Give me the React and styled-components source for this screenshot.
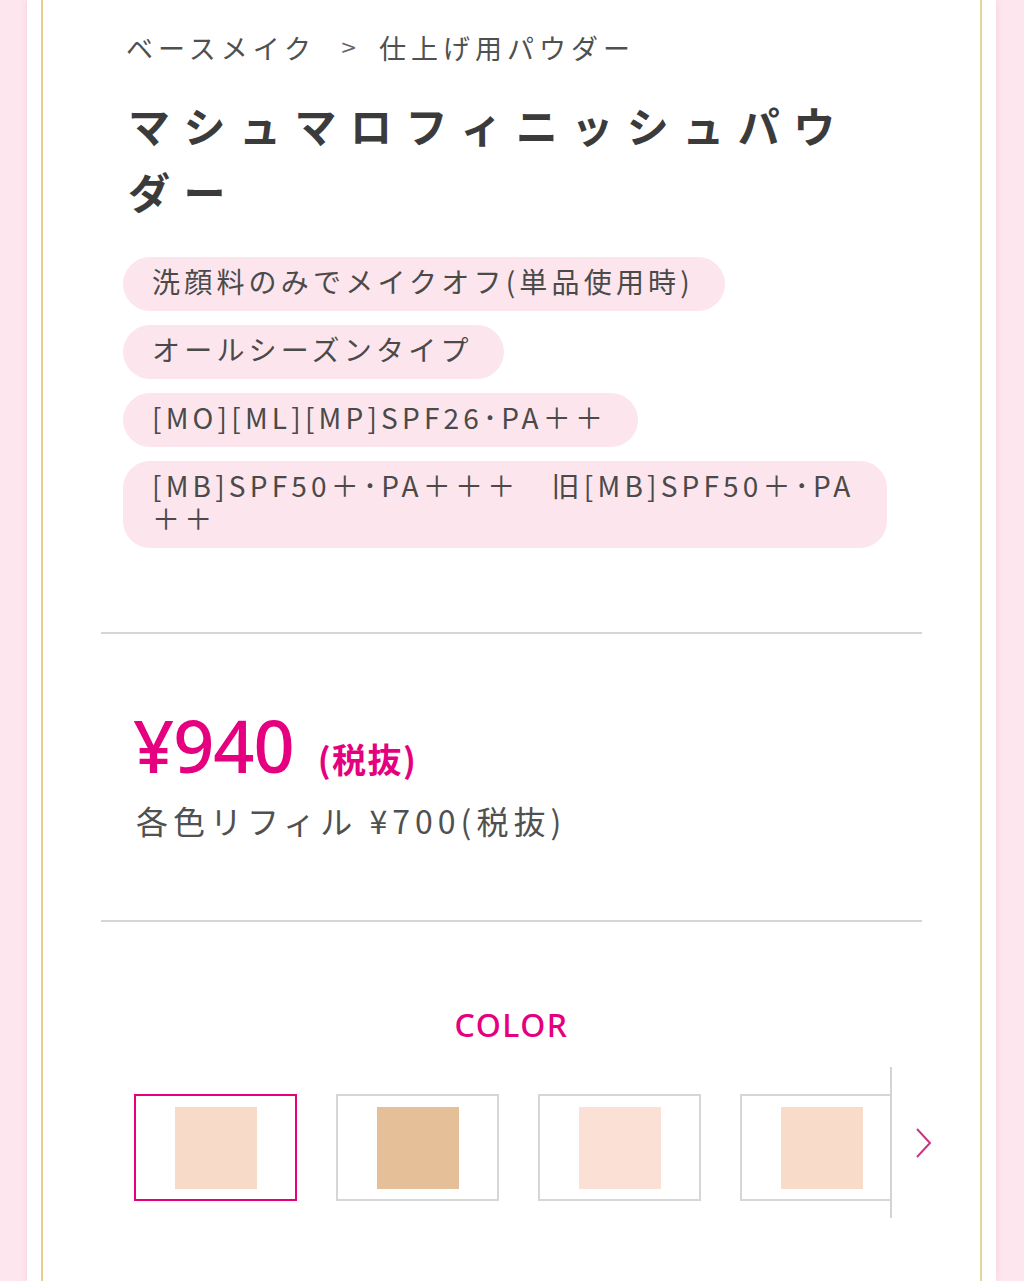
import React from "react";
import styled, { createGlobalStyle } from "styled-components";

const Global = createGlobalStyle`
  html, body { margin: 0; padding: 0; }
  body {
    background: #fde6ed;
    font-family: "Noto Sans CJK JP", "Noto Sans", sans-serif;
    color: #4a4a4a;
    overflow-x: hidden;
  }
  * { box-sizing: border-box; }
`;

const Page = styled.div`
  min-height: 1281px;
  display: flex;
  padding: 0 28px 0 27px;
`;

const Card = styled.div`
  flex: 1;
  min-width: 0;
  background: #ffffff;
  padding: 0 14px;
  display: flex;
  box-shadow: 0 0 6px rgba(236, 170, 190, 0.35);
`;

const Frame = styled.div`
  flex: 1;
  min-width: 0;
  border-left: 2px solid #e8cd8c;
  border-right: 2px solid #e2d699;
  padding: 28px 58px 60px;
`;

const Inner = styled.div`
  padding: 0 22px;
`;

const Breadcrumb = styled.nav`
  display: flex;
  align-items: center;
  font-size: 27px;
  line-height: 39px;
  letter-spacing: 5px;
  color: #505050;
  padding-left: 3px;
`;

const Crumb = styled.span``;

const Sep = styled.span`
  font-family: "DejaVu Sans", sans-serif;
  font-size: 20px;
  color: #666;
  margin: 0 22px 0 24px;
  letter-spacing: 0;
`;

const Title = styled.h1`
  margin: 25px 0 0;
  padding-left: 5px;
  max-width: 760px;
  font-size: 42px;
  font-weight: 700;
  line-height: 66px;
  letter-spacing: 13.5px;
  color: #3b3b3b;
`;

const Tags = styled.div`
  margin-top: 33px;
  display: flex;
  flex-direction: column;
  align-items: flex-start;
  gap: 14px;
`;

const Tag = styled.div`
  background: #fce5ec;
  border-radius: 27px;
  padding: 8px 31px 13px 29px;
  font-size: 28px;
  line-height: 33px;
  letter-spacing: 4.2px;
  color: #4a4a4a;
  max-width: 764px;
`;

const Divider = styled.hr`
  margin: ${(p) => p.$top}px 0 0;
  border: none;
  height: 2px;
  background: #d6d6d6;
`;

const PriceRow = styled.div`
  margin-top: 69px;
  padding-left: 32px;
  display: flex;
  align-items: baseline;
  color: #e4007f;
  line-height: 84px;
`;

const Price = styled.span`
  font-family: "Noto Sans", sans-serif;
  font-size: 72px;
  font-weight: 500;
  letter-spacing: -1px;
`;

const Tax = styled.span`
  font-size: 34px;
  font-weight: 700;
  margin-left: 24px;
  letter-spacing: 1.5px;
`;

const Refill = styled.div`
  margin-top: -5px;
  padding-left: 35px;
  font-size: 32px;
  line-height: 48px;
  letter-spacing: 5px;
  color: #505050;
`;

const ColorHead = styled.h2`
  margin: 84px 0 0;
  text-align: center;
  font-family: "Noto Sans", sans-serif;
  font-size: 32px;
  font-weight: 500;
  line-height: 38px;
  letter-spacing: 1.5px;
  color: #e4007f;
`;

const Slider = styled.div`
  margin-top: 23px;
  display: flex;
  align-items: center;
  padding-left: 33px;
`;

const Viewport = styled.div`
  flex: 0 0 758px;
  height: 151px;
  overflow: hidden;
  border-right: 2px solid #d4d4d4;
  padding-top: 27px;
`;

const Track = styled.div`
  display: flex;
  gap: 39px;
`;

const SwatchBox = styled.button`
  flex: 0 0 163px;
  height: 107px;
  border: 2px solid ${(p) => (p.$active ? "#e4007f" : "#d6d6d6")};
  background: #fff;
  padding: 0;
  display: flex;
  align-items: center;
  justify-content: center;
  cursor: pointer;
`;

const Chip = styled.span`
  width: 82px;
  height: 82px;
  background: ${(p) => p.$c};
`;

const NextBtn = styled.button`
  flex: 0 0 auto;
  margin-left: 23px;
  border: none;
  background: none;
  padding: 0;
  display: flex;
  cursor: pointer;
`;

const swatches = ["#f8dac8", "#e4bf98", "#fbe1d5", "#f9dbc9", "#f3cfb6"];

export default function App() {
  return (
    <>
      <Global />
      <Page>
        <Card>
          <Frame>
            <Inner>
              <Breadcrumb>
                <Crumb>ベースメイク</Crumb>
                <Sep>&gt;</Sep>
                <Crumb>仕上げ用パウダー</Crumb>
              </Breadcrumb>
              <Title>マシュマロフィニッシュパウダー</Title>
              <Tags>
                <Tag>洗顔料のみでメイクオフ(単品使用時)</Tag>
                <Tag>オールシーズンタイプ</Tag>
                <Tag>[MO][ML][MP]SPF26･PA＋＋</Tag>
                <Tag>[MB]SPF50＋･PA＋＋＋　旧[MB]SPF50＋･PA＋＋</Tag>
              </Tags>
            </Inner>
            <Divider $top={84} />
            <PriceRow>
              <Price>¥940</Price>
              <Tax>(税抜)</Tax>
            </PriceRow>
            <Refill>各色リフィル ¥700(税抜)</Refill>
            <Divider $top={76} />
            <ColorHead>COLOR</ColorHead>
            <Slider>
              <Viewport>
                <Track>
                  {swatches.map((c, i) => (
                    <SwatchBox key={i} $active={i === 0}>
                      <Chip $c={c} />
                    </SwatchBox>
                  ))}
                </Track>
              </Viewport>
              <NextBtn aria-label="next">
                <svg width="18" height="32" viewBox="0 0 18 32">
                  <path d="M2 2 L15 16 L2 30" fill="none" stroke="#c8367c" strokeWidth="2" />
                </svg>
              </NextBtn>
            </Slider>
          </Frame>
        </Card>
      </Page>
    </>
  );
}
